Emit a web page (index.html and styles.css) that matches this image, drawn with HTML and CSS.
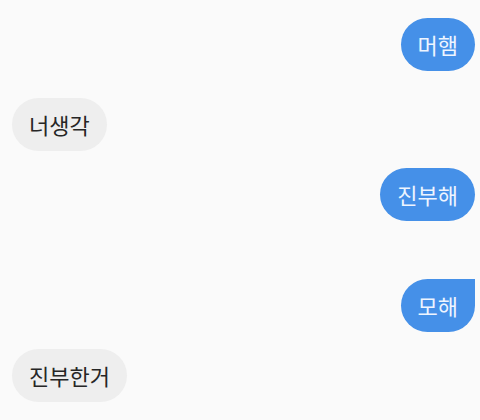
FILE: index.html
```html
<!DOCTYPE html>
<html lang="ko">
<head>
<meta charset="utf-8">
<link rel="stylesheet" href="styles.css">
</head>
<body>
<div class="chat">
  <div class="bubble sent">머햄</div>
  <div class="bubble received spaced">너생각</div>
  <div class="bubble sent">진부해</div>
  <div class="bubble sent tail spaced-lg">모해</div>
  <div class="bubble received">진부한거</div>
</div>
</body>
</html>
```

FILE: styles.css
```css
html, body {
  margin: 0;
  padding: 0;
  background: #fafafa;
}

.chat {
  width: 480px;
  height: 420px;
  box-sizing: border-box;
  padding: 18px 5px 0 12px;
  display: flex;
  flex-direction: column;
  gap: 17px;
  font-family: "Noto Sans CJK KR", "Noto Sans", sans-serif;
}

.bubble {
  font-size: 22px;
  line-height: 30px;
  padding: 11px 17px 12px;
  border-radius: 27px;
}

.sent {
  align-self: flex-end;
  background: #4590e8;
  color: #eef5ff;
}

.received {
  align-self: flex-start;
  background: #eeeeee;
  color: #262626;
}

.tail {
  border-top-right-radius: 0;
}

.spaced {
  margin-top: 10px;
}

.spaced-lg {
  margin-top: 41px;
}
```
